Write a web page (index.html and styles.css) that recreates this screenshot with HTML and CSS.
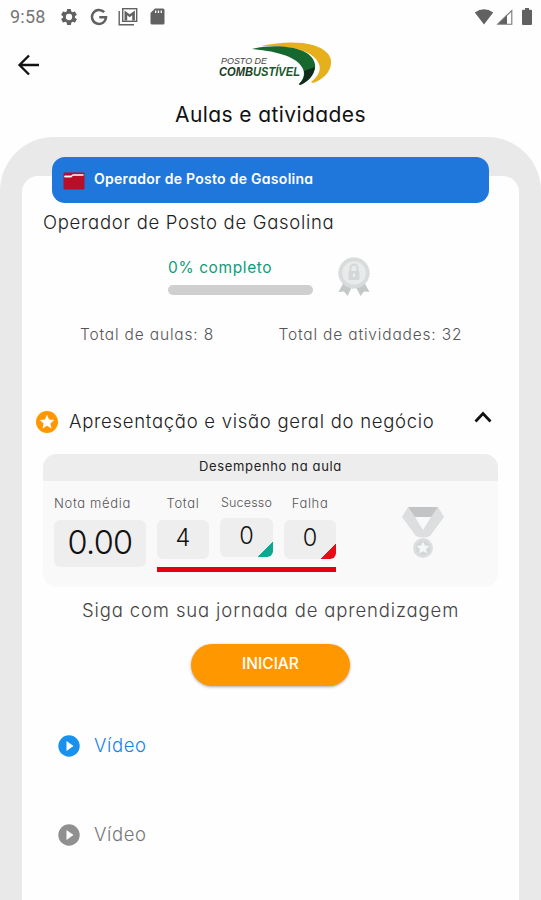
FILE: index.html
```html
<!DOCTYPE html>
<html lang="pt-BR">
<head>
<meta charset="utf-8">
<title>Aulas e atividades</title>
<link rel="stylesheet" href="styles.css">
</head>
<body>
<div class="status">
  <span class="clock">9:58</span>
  <svg class="gear" width="20" height="20" viewBox="0 0 24 24"><path fill-rule="evenodd" d="M19.1 12.9a7 7 0 0 0 0-1.8l2-1.6c.2-.1.3-.4.1-.6l-1.9-3.3c-.1-.2-.4-.3-.6-.2l-2.4 1a7 7 0 0 0-1.6-1l-.4-2.5A.5.5 0 0 0 13.900 2.500h-3.800a.5.5 0 0 0-.5.4l-.4 2.500c-.6.200-1.100.600-1.600 1l-2.400-1c-.2-.1-.5 0-.6.2L2.700 8.900c-.1.200-.1.500.1.600l2 1.600a7 7 0 0 0 0 1.800l-2 1.600c-.2.100-.2.400-.1.600l1.900 3.300c.1.200.4.300.6.200l2.400-1c.5.400 1 .700 1.600 1l.4 2.500c0 .2.200.4.500.4h3.800c.2 0 .5-.2.500-.4l.4-2.500c.6-.2 1.100-.6 1.600-1l2.400 1c.2.100.5 0 .6-.2l1.900-3.300c.1-.2.1-.5-.1-.6zM12 15.800a3.800 3.800 0 1 1 0-7.600 3.800 3.800 0 0 1 0 7.600z"/></svg>
  <svg class="google" width="18" height="18" viewBox="0 0 18 18"><path d="M14.200 4.200A7 7 0 1 0 16 9.300H9.300" fill="none" stroke="#616161" stroke-width="2.500"/></svg>
  <svg class="mail" width="20" height="19" viewBox="0 0 20 19"><path d="M1.200 4v13.800H16" fill="none" stroke="#616161" stroke-width="1.400"/><rect x="4.700" y="1.700" width="14" height="12.600" fill="none" stroke="#616161" stroke-width="1.400"/><path d="M6.500 13.500V3.500l5.200 3.800 5.200-3.800v10h-2.700V8.300l-2.500 1.900-2.500-1.900v5.200z"/></svg>
  <svg class="sd" width="15" height="17" viewBox="0 0 15 17"><path fill-rule="evenodd" d="M5 .5h8a1.500 1.500 0 0 1 1.500 1.500v13a1.500 1.500 0 0 1-1.500 1.500H2A1.500 1.500 0 0 1 .5 15V5zM5 2.500V5h1.300V2.500zm2.800 0V5h1.300V2.500zm2.800 0V5h1.300V2.500z"/></svg>
  <svg class="wifi" width="20" height="16" viewBox="0 0 20 16"><path d="M10 15.500.8 3.500Q10-3 19.200 3.500z"/></svg>
  <svg class="signal" width="17" height="16" viewBox="0 0 17 16"><path d="M11 5.500V15H1.500z"/><path d="M1.800 15.200 15.800 1.500v13.700z" fill="none" stroke="#777" stroke-width="1.100"/></svg>
  <svg class="battery" width="10" height="17" viewBox="0 0 10 17"><path d="M3 0h4v1.700h2q1 0 1 1V16q0 1-1 1H1q-1 0-1-1V2.700q0-1 1-1h2z"/></svg>
</div>
<header class="appbar">
  <svg class="back" width="24" height="24" viewBox="0 0 24 24"><path d="M22 12H3M12 2.500 2.500 12l9.500 9.500" fill="none" stroke="#111" stroke-width="2.300"/></svg>
  <svg class="logo" width="120" height="50" viewBox="0 0 120 50">
    <path d="M46 6C64 2 84 1 98 5c13 4 19 11 18 19-1 9-9 16-18 19l-2-1c8-6 10-12 8-18C99 11 78 5 46 6z" fill="#e5b01c"/>
    <path d="M37 9c14-4 38-4 51 2 9 4 13 11 12 17-1 7-7 14-15 17l-1-1c5-5 6-10 4-15C83 17 62 11 37 9z" fill="#17682f"/>
    <path d="M100 27c-1 8-7 15-15 18l-1-1c5-5 6-9 5-13z" fill="#102b1b"/>
    <g class="logo-text"><text x="6" y="23.500" font-size="9.500" textLength="46" lengthAdjust="spacingAndGlyphs" fill="#444">POSTO DE</text>
    <text x="4" y="36" font-size="12.500" font-weight="700" textLength="81" lengthAdjust="spacingAndGlyphs"><tspan fill="#183b25">COMB</tspan><tspan fill="#17592b">USTÍVEL</tspan></text></g>
  </svg>
</header>
<h1 class="title">Aulas e atividades</h1>
<main class="frame">
  <div class="course">
    <svg width="22" height="18" viewBox="0 0 22 18"><rect x=".5" y=".5" width="21" height="17" rx="1" fill="#b90e27"/><path d="M1.500 4.500H8l2-1.500h10.500" fill="none" stroke="#fff" stroke-width="1.300"/><path d="M1.500 4.500h7" stroke="#fff" stroke-width="1.500"/></svg>
    <span>Operador de Posto de Gasolina</span>
  </div>
  <section class="panel">
    <h2 class="name">Operador de Posto de Gasolina</h2>
    <div class="progress">
      <div class="meter"><span class="pct">0% completo</span><div class="track"></div></div>
      <svg width="34" height="40" viewBox="0 0 34 40"><path d="M7 26 1.500 36l5.500-.5L10.500 40 15 31zM27 26l5.500 10-5.500-.5-3.500 4.500L19 31z" fill="#c5c8c8"/><circle cx="17" cy="17" r="15.300" fill="#d8dbdb" stroke="#d8dbdb" stroke-width="1" stroke-dasharray="2 1"/><circle cx="17" cy="17" r="11.800" fill="#e9ebeb"/><path d="M13.500 16v-4a3.500 3.500 0 0 1 7 0v4" fill="none" stroke="#d3d7d7" stroke-width="2"/><rect x="11.500" y="15" width="11" height="9" rx="1.500" fill="#d3d7d7"/><path d="M17 17.500v3.500" stroke="#eee" stroke-width="2"/></svg>
    </div>
    <div class="totals"><span>Total de aulas: 8</span><span class="acts">Total de atividades: 32</span></div>
    <div class="lesson">
      <svg width="22" height="22" viewBox="0 0 22 22"><circle cx="11" cy="11" r="11" fill="#ff9800"/><path d="m11 3.800 2.100 4.700 5.100.5-3.800 3.400 1.100 5-4.500-2.600-4.500 2.600 1.100-5L3.800 9l5.100-.5z" fill="#fff"/></svg>
      <h3>Apresentação e visão geral do negócio</h3>
      <svg class="chev" width="18" height="12" viewBox="0 0 18 12"><path d="m1.500 10.500 7.500-8 7.500 8" fill="none" stroke="#111" stroke-width="2.700"/></svg>
    </div>
    <div class="card">
      <div class="card-head">Desempenho na aula</div>
      <div class="card-body">
        <div class="avg"><span class="label">Nota média</span><div class="box big">0.00</div></div>
        <div class="scores">
          <div class="cols">
            <div class="col"><span class="label">Total</span><div class="box">4</div></div>
            <div class="col success"><span class="label">Sucesso</span><div class="box">0</div></div>
            <div class="col fail"><span class="label">Falha</span><div class="box">0</div></div>
          </div>
          <div class="rule"></div>
        </div>
        <svg class="medal" width="42" height="52" viewBox="0 0 42 52"><path d="M6 0h30l-6 10H12z" fill="#c2c4c5"/><path d="M6 0 0 10l14 19q7 3 14 0L42 10 36 0l-7 10-8 13-8-13z" fill="#dcdedf"/><circle cx="21" cy="41" r="10" fill="#dcdfdf"/><circle cx="21" cy="41" r="7.500" fill="#d3d7d7"/><path d="m21 34.500 1.900 4.100 4.500.5-3.300 3 .9 4.500-4-2.300-4 2.300.9-4.500-3.300-3 4.500-.5z" fill="#f5f6f6"/></svg>
      </div>
    </div>
    <p class="hint">Siga com sua jornada de aprendizagem</p>
    <button class="start">INICIAR</button>
    <div class="videos">
      <div class="video on"><svg width="22" height="22" viewBox="0 0 22 22"><circle cx="11" cy="11" r="10.700"/><path d="m8.500 6 7 5-7 5z" fill="#fff"/></svg><span>Vídeo</span></div>
      <div class="video"><svg width="22" height="22" viewBox="0 0 22 22"><circle cx="11" cy="11" r="10.700"/><path d="m8.500 6 7 5-7 5z" fill="#fff"/></svg><span>Vídeo</span></div>
    </div>
  </section>
</main>
</body>
</html>
```
FILE: styles.css
```css
* { box-sizing: border-box; margin: 0; }
body { height: 900px; overflow: hidden; background: #fefefe; font-family: Inter, "Open Sans", sans-serif; font-feature-settings: "cv11"; font-weight: 300; white-space: nowrap; display: flex; flex-direction: column; }
svg { display: block; flex: none; }
.status { height: 33px; display: flex; align-items: center; padding: 0 9px 0 10px; fill: #616161; color: #757575; }
.clock { width: 49px; font: 400 18px Roboto, sans-serif; letter-spacing: .2px; }
.google { margin-left: 11px; }
.mail { margin-left: 10px; }
.sd { margin-left: 12px; }
.wifi { margin-left: auto; }
.signal { margin-left: 2px; }
.battery { margin-left: 9px; }
.appbar { height: 63px; display: flex; align-items: flex-start; padding: 7px 0 0 17px; }
.back { margin-top: 13px; }
.logo { margin-left: 174px; }
.logo-text { font-family: "Liberation Sans", sans-serif; font-style: italic; }
.title { height: 41px; line-height: 38px; text-align: center; font-size: 21px; font-weight: 400; letter-spacing: .4px; color: #111; }
.frame { flex: 1; padding: 20px 22px 0; background: #e9e9e9; border-radius: 54px 54px 0 0; }
.course { position: relative; z-index: 1; width: 437px; height: 46px; margin-left: 30px; padding: 0 0 3px 11px; display: flex; align-items: center; gap: 9px; border-radius: 13px; background: #1f77db; color: #fff; font-size: 14px; font-weight: 600; letter-spacing: .28px; }
.course svg { margin-top: 4px; }
.panel { margin-top: -27px; height: 724px; padding: 33px 21px 0; background: #fefefe; border-radius: 16px 16px 0 0; }
.name { height: 26px; line-height: 26px; font-size: 18.500px; font-weight: 300; letter-spacing: .7px; color: #222; }
.progress { display: flex; height: 41px; margin: 21px 0 0 125px; }
.meter { width: 145px; margin-right: 24px; }
.pct { display: block; height: 29px; line-height: 24px; font-size: 15.500px; font-weight: 400; letter-spacing: .6px; color: #109b78; }
.track { height: 10px; border-radius: 5px; background: #cfcfcf; }
.totals { display: flex; height: 20px; line-height: 20px; margin: 28px 0 0 37px; font-size: 15.500px; letter-spacing: .83px; color: #555; }
.totals span { width: 198.500px; }
.lesson { display: flex; align-items: center; height: 26px; margin: 64px 0 0 -7px; }
.lesson h3 { width: 405px; margin: -2px 0 0 11px; font-size: 18.500px; font-weight: 300; letter-spacing: .72px; color: #222; }
.chev { margin: -11px 0 0; }
.card { width: 455px; height: 133px; margin-top: 19px; overflow: hidden; border-radius: 14px; background: #f9f9f9; }
.card-head { height: 27px; line-height: 25px; text-align: center; background: #ededed; font-size: 13px; font-weight: 400; letter-spacing: .65px; color: #222; }
.card-body { display: flex; padding: 13px 0 0 11px; }
.label { display: block; height: 26px; line-height: 19px; font-size: 13px; letter-spacing: .65px; color: #555; }
.avg { width: 92px; margin-right: 11px; }
.box { height: 39px; line-height: 35px; border-radius: 6px; background: #eee; text-align: center; font-size: 23.500px; color: #111; }
.big { height: 47px; line-height: 45px; font-size: 32.500px; letter-spacing: -.7px; }
.cols { display: flex; gap: 11px; height: 73px; }
.col { width: 52px; text-align: center; }
.success { margin-top: -1px; width: 53px; }
.success .label { height: 25px; font-size: 12.500px; letter-spacing: .2px; }
.success .box { background: linear-gradient(135deg, transparent 50%, #0ca892 50%) right bottom / 16px 15px no-repeat #eee; }
.fail .box { background: linear-gradient(135deg, transparent 50%, #e80c15 50%) right bottom / 16px 15px no-repeat #eee; }
.rule { width: 179px; height: 5px; background: #e4000f; }
.medal { margin: 13px 0 0 66px; }
.hint { height: 26px; line-height: 26px; margin: 10px 0 0 39px; font-size: 18.500px; letter-spacing: .86px; color: #444; }
.start { display: block; width: 159px; height: 42px; margin: 21px 0 0 148px; padding: 0 0 3px; border: 0; border-radius: 21px; background: #ff9800; box-shadow: 0 1px 3px #0005; color: #fff; font: 500 15.500px Inter, sans-serif; }
.videos { margin: 49px 0 0 15px; }
.video { display: flex; align-items: center; gap: 14px; height: 22px; margin-bottom: 67px; fill: #909090; color: #777; font-size: 18.500px; letter-spacing: .6px; }
.video span { margin-top: -2px; }
.on { fill: #1891ef; color: #1683eb; }
```
